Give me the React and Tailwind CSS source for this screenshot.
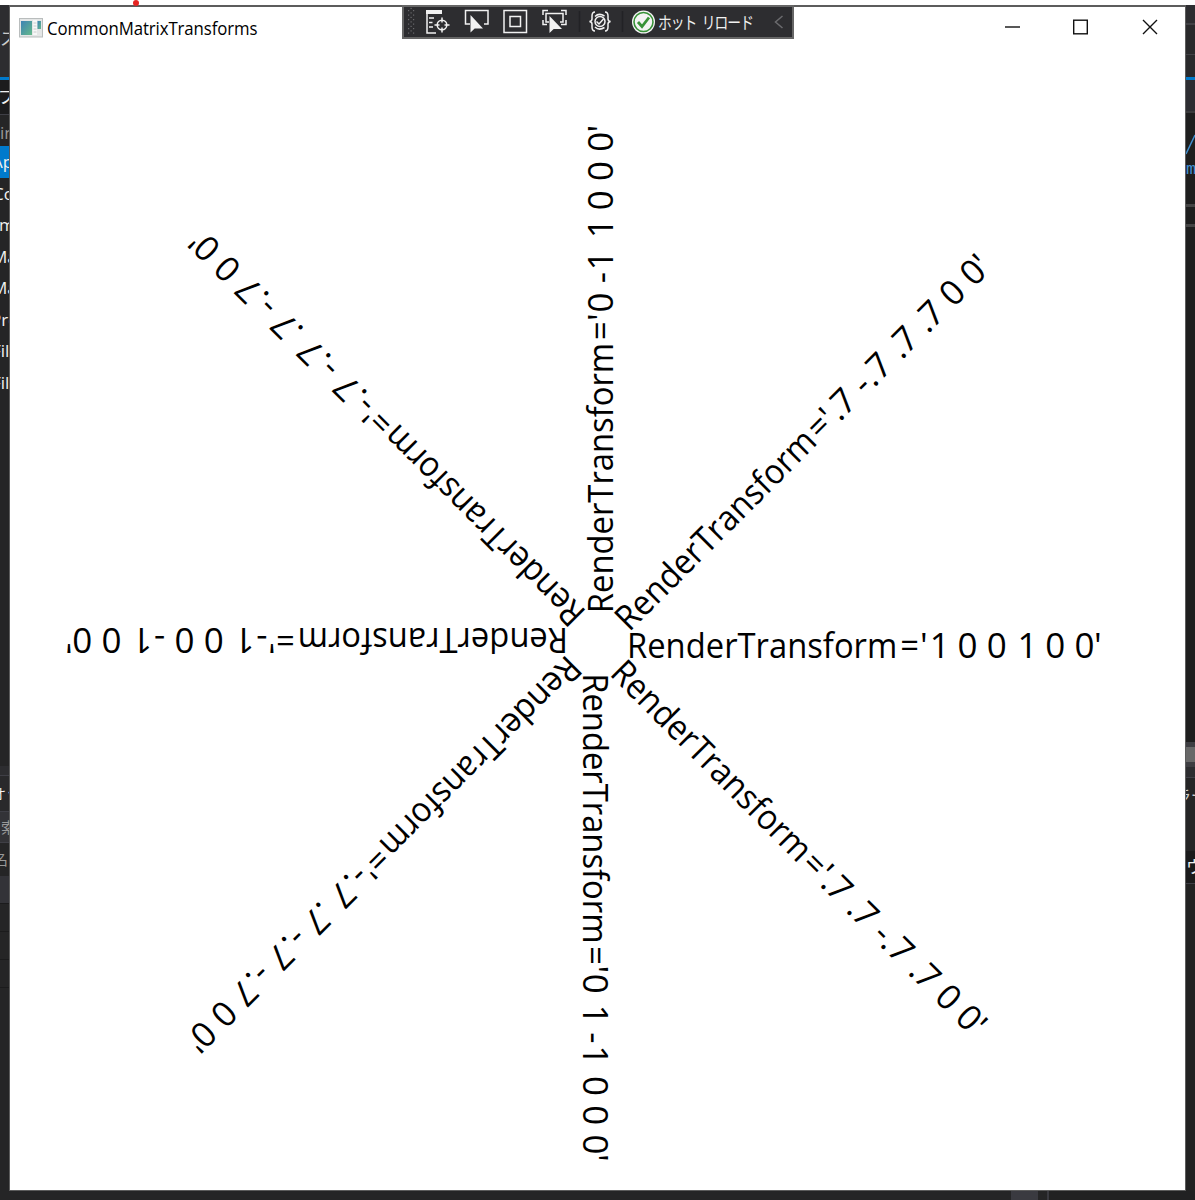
// CommonMatrixTransforms window, floating over the IDE it was started from

const labels = [
  { values: ["1", "0", "0", "1", "0", "0"], matrix: "[transform:matrix(1,0,0,1,0,0)]" },
  { values: [".7", ".7", "-.7", ".7", "0", "0"], matrix: "[transform:matrix(.7,.7,-.7,.7,0,0)]" },
  { values: ["0", "1", "-1", "0", "0", "0"], matrix: "[transform:matrix(0,1,-1,0,0,0)]" },
  { values: ["-.7", ".7", "-.7", "-.7", "0", "0"], matrix: "[transform:matrix(-.7,.7,-.7,-.7,0,0)]" },
  { values: ["-1", "0", "0", "-1", "0", "0"], matrix: "[transform:matrix(-1,0,0,-1,0,0)]" },
  { values: ["-.7", "-.7", ".7", "-.7", "0", "0"], matrix: "[transform:matrix(-.7,-.7,.7,-.7,0,0)]" },
  { values: ["0", "-1", "1", "0", "0", "0"], matrix: "[transform:matrix(0,-1,1,0,0,0)]" },
  { values: [".7", "-.7", ".7", ".7", "0", "0"], matrix: "[transform:matrix(.7,-.7,.7,.7,0,0)]" },
];

const valueClass = {
  "0": "w-[19.4px]",
  "1": "w-[19.4px] indent-[1.5px]",
  "-1": "w-[33.8px] tracking-[1.6px]",
  ".7": "w-[27.2px] tracking-[-1.6px]",
  "-.7": "w-[41.6px] tracking-[0.4px]",
};

const files = [
  { name: "Ap", pos: "-ml-[8px]" },
  { name: "Co", pos: "-ml-[7px]" },
  { name: "m", pos: "-ml-px" },
  { name: "Ma", pos: "-ml-[8px]" },
  { name: "Ma", pos: "-ml-[8px]" },
  { name: "Pro", pos: "-ml-[9px]" },
  { name: "Fil", pos: "-ml-[8px]" },
  { name: "Fil", pos: "-ml-[8px]" },
];

function Label({ values, matrix }) {
  return (
    <div
      className={`absolute left-[587.6px] top-[619px] flex origin-[0_17.2px] whitespace-pre pl-[29.7px] pt-[0.8px] text-[35px] leading-[36px] text-black ${matrix}`}
    >
      <div className="w-[292.6px]">
        <span className="inline-block origin-left scale-x-[.936]">
          RenderTransform<span className="pl-[3px]">=</span>
        </span>
      </div>
      <span className="w-[8.3px]">'</span>
      <span className="flex gap-[9.9px]">
        {values.map((v, i) => (
          <span key={i} className={valueClass[v]}>
            {v}
          </span>
        ))}
      </span>
      <span>'</span>
    </div>
  );
}

function AppIcon() {
  return (
    <svg width="24" height="20" viewBox="0 0 24 20">
      <defs>
        <linearGradient id="pane" x1="0" y1="0" x2="1" y2="1">
          <stop offset="0" stopColor="#3d83b5" />
          <stop offset="1" stopColor="#65b98a" />
        </linearGradient>
      </defs>
      <rect x=".5" y=".5" width="23" height="18.5" fill="#e4e6e6" stroke="#b9bdbd" />
      <rect x="2" y="3" width="11" height="14" fill="url(#pane)" />
      <rect x="14" y="2" width="4" height="15" fill="#f7f7f7" />
      <path d="M14.5 5h3M14.5 8h3M14.5 11h3M14.5 14h3" stroke="#c9cccc" />
      <rect x="18.5" y="3" width="3.5" height="8" fill="url(#pane)" />
    </svg>
  );
}

function TitleBar() {
  return (
    <div className="flex h-[41px] items-center justify-between bg-white pl-[9px] text-black">
      <div className="flex items-center gap-[4px]">
        <AppIcon />
        <span className="origin-left scale-x-[.955] text-[17.6px] leading-[24px] tracking-[-0.1px]">
          CommonMatrixTransforms
        </span>
      </div>
      <svg width="184" height="41" viewBox="0 0 184 41" fill="none" stroke="#111" strokeWidth="1.4">
        <path d="M4 20h15" />
        <rect x="72.7" y="13.2" width="13.6" height="13.6" />
        <path d="M142 13l14 14M156 13l-14 14" />
      </svg>
    </div>
  );
}

function DebugToolbar() {
  return (
    <div className="absolute left-[402px] top-[5px] flex h-[34px] w-[392px] items-center border-2 border-[#666] bg-[#2d2d30] text-[#f1f1f1]">
      <svg width="228" height="30" viewBox="404 7 228 30" fill="none" stroke="#f1f1f1" strokeWidth="1.5">
        {/* grip */}
        <g fill="#6a6a6d" stroke="none">
          {[10, 14.5, 19, 23.5, 28, 32.5].map((y) => (
            <g key={y}>
              <rect x="408" y={y} width="1.2" height="1.2" />
              <rect x="413" y={y} width="1.2" height="1.2" />
              <rect x="410.5" y={y - 2.2} width="1.2" height="1.2" />
            </g>
          ))}
        </g>
        {/* live visual tree */}
        <path d="M426 10h16v4h-16z" fill="#f1f1f1" stroke="none" />
        <path d="M427 13v20h9M429 18h5M429 22.5h3.5M429 27h4" />
        <circle cx="442" cy="25" r="4.8" />
        <path d="M442 17.5v5M442 27.5v5M434.5 25h5M444.5 25h5" />
        {/* select element */}
        <path d="M470 24h-4.5V10.5h22.5V24h-4" />
        <path d="M470.5 15v17.5l4.2-4h8.3z" fill="#f1f1f1" stroke="none" />
        {/* layout adorners */}
        <rect x="504" y="10.5" width="22.5" height="22" />
        <rect x="510" y="16.5" width="10.5" height="10" />
        {/* track focused element */}
        <path d="M543 15v-4.5h5M561 10.5h5V15M543 20v4.5h4M561 24.5h5V20M549 22h-3v-8.5h17V22h-3" />
        <path d="M549.5 16v17l4.2-4h8.3z" fill="#f1f1f1" stroke="none" />
        <path d="M579.5 11v21" stroke="#222225" />
        {/* binding failures */}
        <path d="M595 12q-3 0-3 4v3q0 2-2.5 2.5 2.5.5 2.5 2.5v3q0 4 3 4M605 12q3 0 3 4v3q0 2 2.5 2.5-2.5.5-2.5 2.5v3q0 4-3 4" />
        <path d="M595 16.5q4-4 9.5-.5M595 27q4 4 9.5.5" />
        <circle cx="600" cy="21.5" r="5" />
        <path d="M596.5 21.5l2.5 2.5 4.5-5" />
        <path d="M622.5 11v21" stroke="#222225" />
      </svg>
      <svg width="24" height="24" viewBox="0 0 24 24" fill="none">
        <circle cx="11.5" cy="12" r="11.5" fill="#f4f4f4" />
        <circle cx="11.5" cy="12" r="9.5" stroke="#389238" strokeWidth="1.6" />
        <path d="M6 12l4 4.5 7-9" stroke="#389238" strokeWidth="2.8" />
      </svg>
      <div className="w-[118px] pl-[2px]">
        <span className="inline-block origin-left scale-x-[.81] whitespace-pre font-['Noto_Sans_CJK_JP',sans-serif] text-[17px] leading-[24px] tracking-[-1.2px] [word-spacing:4px]">
          ホット リロード
        </span>
      </div>
      <svg width="10" height="16" viewBox="0 0 10 16" fill="none" stroke="#6b6b6e" strokeWidth="1.5">
        <path d="M8.5 2L1.5 8l7 6" />
      </svg>
    </div>
  );
}

function LeftStrip() {
  return (
    <div className="flex w-[9px] shrink-0 flex-col overflow-hidden whitespace-nowrap bg-[#252526] text-[17px] text-[#f1f1f1]">
      <div className="h-[72px] bg-[#2d2d30] pt-[22px] leading-[24px] text-[#ccc]">ス</div>
      <div className="h-[3px] shrink-0 bg-[#007acc]" />
      <div className="h-[34px] bg-[#1c1c1d] pt-[5px] leading-[24px]">
        <span className="-ml-[2px]">プ</span>
      </div>
      <div className="h-[32px] border-t border-[#3f3f46] pt-[6px] leading-[24px] text-[#999]">in</div>
      {files.map((f, i) => (
        <div
          key={i}
          className={
            i === 0
              ? "flex h-[31.5px] shrink-0 items-center bg-[#007acc]"
              : "flex h-[31.5px] shrink-0 items-center"
          }
        >
          <span className={f.pos}>{f.name}</span>
        </div>
      ))}
      <div className="h-[368px] shrink-0" />
      <div className="h-[9px] shrink-0 bg-[#2d2d30]" />
      <div className="flex h-[36px] shrink-0 items-center border-t border-[#3f3f46] bg-[#29292b] text-[14px]">
        <span className="-ml-[8px]">オッ</span>
      </div>
      <div className="flex h-[32px] shrink-0 items-center border-y border-[#3f3f46] bg-[#333337] text-[15px] text-[#999]">
        <span className="ml-px">索</span>
      </div>
      <div className="flex h-[33px] shrink-0 items-center bg-[#252526] text-[15px] text-[#999]">
        <span className="-ml-[7px]">名</span>
      </div>
      <div className="h-[27px] shrink-0 bg-[#333338]" />
      <div className="h-[28px] shrink-0 border-t border-[#1b1b1c]" />
      <div className="h-[28px] shrink-0 border-t border-[#1b1b1c]" />
      <div className="h-[28px] shrink-0 border-t border-[#1b1b1c]" />
      <div className="flex-1 border-t border-[#1b1b1c]" />
    </div>
  );
}

function RightStrip() {
  return (
    <div className="flex w-[9px] shrink-0 flex-col overflow-hidden whitespace-nowrap bg-[#1e1e1e] text-[17px]">
      <div className="h-[18px] shrink-0 bg-[#2d2d30]" />
      <div className="h-[31px] shrink-0 border-t-2 border-[#414145] bg-[#29292b]" />
      <div className="h-[23px] shrink-0 border-t border-[#414145] bg-[#29292b]" />
      <div className="h-[3px] shrink-0 bg-[#007acc]" />
      <div className="h-[31px] shrink-0 bg-[#2d2d32]" />
      <div className="h-[93px] shrink-0 border-t-2 border-[#3a3a3c] pt-[21px] font-['Liberation_Mono',monospace] leading-[28px] text-[#4190d2]">
        <svg width="9" height="22" viewBox="0 0 9 22" fill="none" stroke="#4190d2" strokeWidth="1.4">
          <path d="M0 20L9 1" />
        </svg>
        <span>m</span>
      </div>
      <div className="h-[3px] shrink-0 bg-[#444]" />
      <div className="h-[17px] shrink-0" />
      <div className="h-[3px] shrink-0 bg-[#444]" />
      <div className="h-[515px] shrink-0" />
      <div className="h-[5px] shrink-0 bg-[#3e3e42]" />
      <div className="h-[15px] shrink-0 bg-[#686868]" />
      <div className="h-[5px] shrink-0 bg-[#3e3e42]" />
      <div className="h-[10px] shrink-0 bg-[#2d2d30]" />
      <div className="flex h-[74px] shrink-0 border-t border-[#3f3f46] bg-[#252526] pt-[6px] text-[15px] text-[#ccc]">
        <span className="-ml-[10px]">ラー</span>
      </div>
      <div className="flex h-[33px] shrink-0 items-center border-b border-[#3f3f46] bg-[#1b1b1c] text-[17px] text-[#f1f1f1]">
        ウ
      </div>
      <div className="flex-1 bg-[#222]" />
    </div>
  );
}

export default function App() {
  return (
    <div className="relative flex h-[1200px] w-[1195px] flex-col overflow-hidden bg-[#252526] font-['Open_Sans','Noto_Sans_CJK_JP',sans-serif]">
      <div className="h-[5px] shrink-0 bg-white" />
      <div className="flex h-[1186px] shrink-0">
        <LeftStrip />
        <div className="relative w-[1177px] shrink-0 border border-t-2 border-[#5c5c5c] bg-white">
          <TitleBar />
          {labels.map((l, i) => (
            <Label key={i} {...l} />
          ))}
        </div>
        <RightStrip />
      </div>
      <div className="flex flex-1 bg-[#252526]">
        <div className="w-[1011px]" />
        <div className="w-[27px] bg-[#3a3a40]" />
        <div className="ml-[9px] w-[2px] bg-[#3a3a40]" />
        <div className="flex-1 bg-[#212122]" />
      </div>
      <div className="absolute left-[133px] top-0 h-[6px] w-[6px] rounded-full bg-[#e52421]" />
      <DebugToolbar />
    </div>
  );
}
